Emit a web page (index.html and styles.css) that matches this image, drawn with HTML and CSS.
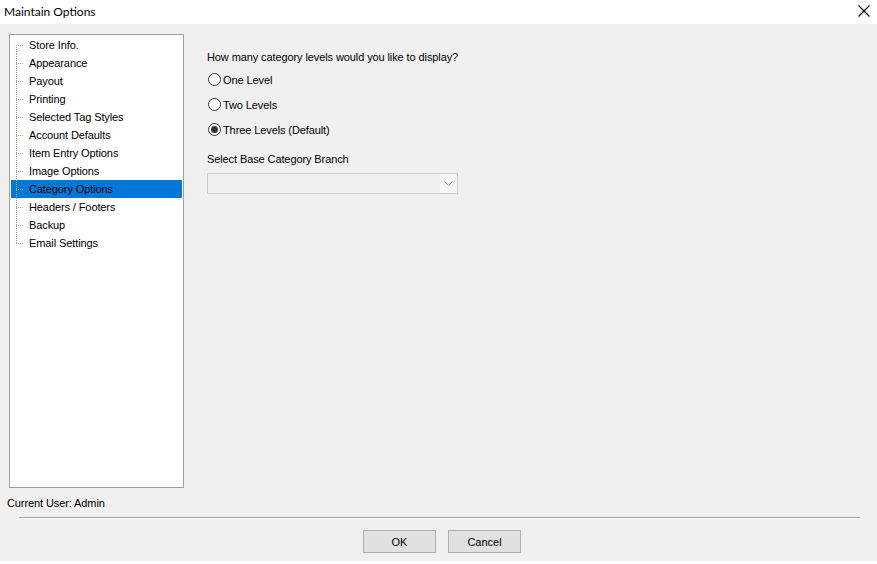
FILE: index.html
```html
<!DOCTYPE html>
<html lang="en">
<head>
    <meta charset="UTF-8">
    <title>Maintain Options</title>
    <link rel="stylesheet" href="styles.css">
</head>
<body>
    <div class="window">
        <div class="titlebar">
            <span class="title">Maintain Options</span>
            <span class="close">
                <svg width="12" height="12" viewBox="0 0 12 12"><path d="M0.5 0.5 L11.5 11.5 M11.5 0.5 L0.5 11.5" stroke="#000" stroke-width="1.1" fill="none"/></svg>
            </span>
        </div>
        <div class="client">
            <div class="main">
                <div class="tree">
                    <div class="node first">Store Info.</div>
                    <div class="node">Appearance</div>
                    <div class="node">Payout</div>
                    <div class="node">Printing</div>
                    <div class="node">Selected Tag Styles</div>
                    <div class="node">Account Defaults</div>
                    <div class="node">Item Entry Options</div>
                    <div class="node">Image Options</div>
                    <div class="node selected">Category Options</div>
                    <div class="node">Headers / Footers</div>
                    <div class="node">Backup</div>
                    <div class="node last">Email Settings</div>
                </div>
                <div class="panel">
                    <p class="question">How many category levels would you like to display?</p>
                    <label class="radio"><span class="circle"></span>One Level</label>
                    <label class="radio"><span class="circle"></span>Two Levels</label>
                    <label class="radio"><span class="circle checked"></span>Three Levels (Default)</label>
                    <p class="combo-label">Select Base Category Branch</p>
                    <div class="combo">
                        <span class="combo-value"></span>
                        <span class="combo-btn">
                            <svg width="9" height="5" viewBox="0 0 9 5"><path d="M0.5 0.5 L4.5 4.5 L8.5 0.5" stroke="#a6a6a6" stroke-width="1" fill="none"/></svg>
                        </span>
                    </div>
                </div>
            </div>
            <div class="status">Current User: Admin</div>
            <div class="separator"></div>
            <div class="buttons">
                <button class="btn">OK</button>
                <button class="btn">Cancel</button>
            </div>
        </div>
    </div>
</body>
</html>
```

FILE: styles.css
```css
body {
    margin: 0;
    padding: 0;
    background-color: #ffffff;
    font-family: 'Liberation Sans', Arial, sans-serif;
    font-size: 11px;
    letter-spacing: -0.1px;
    color: #000;
}
.window {
    width: 877px;
    height: 561px;
    display: flex;
    flex-direction: column;
}
.titlebar {
    height: 24px;
    background: #ffffff;
    display: flex;
    align-items: center;
    justify-content: space-between;
    padding: 0 7px 0 4px;
}
.title {
    font-family: Lato, 'Noto Sans', sans-serif;
    font-size: 12px;
    letter-spacing: 0;
    margin-top: -2px;
}
.close {
    display: flex;
    width: 12px;
    height: 12px;
    margin-top: -2px;
}
.client {
    flex: 1;
    background: #f0f0f0;
    display: flex;
    flex-direction: column;
}
.main {
    display: flex;
    padding: 10px 0 0 9px;
}
.tree {
    width: 173px;
    height: 451px;
    border: 1px solid #a0a0a0;
    background: #ffffff;
    padding-top: 1px;
    box-sizing: content-box;
}
.node {
    position: relative;
    height: 18px;
    line-height: 18px;
    padding-left: 18px;
    margin: 0 1px 0 1px;
    white-space: nowrap;
}
.node::before {
    content: "";
    position: absolute;
    left: 5px;
    top: 0;
    bottom: 0;
    width: 1px;
    background: repeating-linear-gradient(to bottom, #a0a0a0 0 1px, transparent 1px 2px);
}
.node.first::before {
    top: 9px;
}
.node.last::before {
    bottom: 9px;
}
.node::after {
    content: "";
    position: absolute;
    left: 5px;
    top: 9px;
    width: 8px;
    height: 1px;
    background: repeating-linear-gradient(to right, #a0a0a0 0 1px, transparent 1px 2px);
}
.node.selected {
    background: #0078d7;
    margin-left: 1px;
}
.panel {
    padding-left: 23px;
    padding-top: 16px;
}
.question {
    margin: 0 0 9px 0;
    line-height: 14px;
}
.radio {
    display: flex;
    align-items: center;
    height: 13px;
    margin-bottom: 12px;
    margin-left: 1px;
}
.radio:nth-of-type(3) {
    margin-top: 1px;
    margin-bottom: 0;
}
.circle {
    width: 11px;
    height: 11px;
    border: 1px solid #333333;
    border-radius: 50%;
    background: #ffffff;
    margin-right: 2px;
    display: flex;
    align-items: center;
    justify-content: center;
}
.circle.checked::after {
    content: "";
    width: 7px;
    height: 7px;
    border-radius: 50%;
    background: #333333;
}
.combo-label {
    margin: 16px 0 7px 0;
    line-height: 14px;
}
.combo {
    width: 249px;
    height: 19px;
    border: 1px solid #cccccc;
    background: #f0f0f0;
    display: flex;
    justify-content: space-between;
}
.combo-btn {
    width: 17px;
    background: #f7f7f7;
    display: flex;
    align-items: center;
    justify-content: center;
}
.status {
    margin: 8px 0 0 7px;
    line-height: 14px;
}
.separator {
    margin: 7px 17px 0 19px;
    height: 1px;
    background: #a0a0a0;
    border-bottom: 1px solid #ffffff;
}
.buttons {
    display: flex;
    justify-content: center;
    gap: 12px;
    margin-top: 11px;
    padding-left: 7px;
}
.btn {
    width: 73px;
    height: 23px;
    background: #e1e1e1;
    border: 1px solid #adadad;
    font-family: 'Liberation Sans', Arial, sans-serif;
    font-size: 11px;
    color: #000;
    padding: 0;
}
```
